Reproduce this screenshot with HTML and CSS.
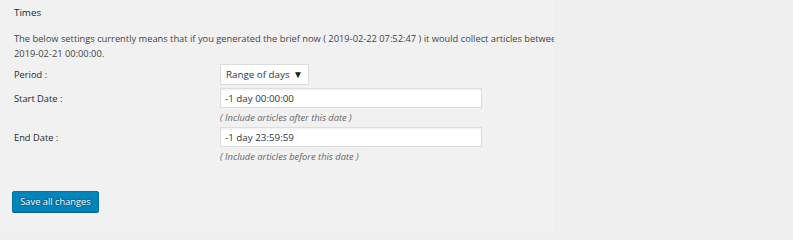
FILE: index.html
```html
<!DOCTYPE html>
<html lang="en">
<head>
<meta charset="utf-8">
<title>Times</title>
<link rel="stylesheet" href="styles.css">
</head>
<body>
<div class="page">
  <div class="panel">
    <h3 class="heading">Times</h3>
    <p class="intro">The below settings currently means that if you generated the brief now ( 2019-02-22 07:52:47 ) it would collect articles between 2019-02-20 00:00:00 and<br>2019-02-21 00:00:00.</p>
    <div class="form">
      <div class="label">Period :</div>
      <div class="field">
        <div class="select"><span>Range of days</span><span class="arrow">&#9660;</span></div>
      </div>
      <div class="label">Start Date :</div>
      <div class="field">
        <input class="text" type="text" value="-1 day 00:00:00">
        <div class="hint">( Include articles after this date )</div>
      </div>
      <div class="label">End Date :</div>
      <div class="field">
        <input class="text" type="text" value="-1 day 23:59:59">
        <div class="hint">( Include articles before this date )</div>
      </div>
    </div>
    <div class="actions">
      <button class="button" type="button">Save all changes</button>
    </div>
  </div>
</div>
</body>
</html>
```
FILE: styles.css
```css
html, body {
  margin: 0;
  padding: 0;
  background: #efefef;
}
body {
  font-family: "Open Sans", "Noto Sans", "Liberation Sans", sans-serif;
  font-size: 9.3px;
  line-height: 15px;
  color: #444;
}
.page {
  width: 793px;
  height: 233px;
  overflow: hidden;
}
.panel {
  width: 540px;
  height: 233px;
  padding-left: 14px;
  background: #f1f1f1;
  overflow: hidden;
  box-sizing: content-box;
}
.heading {
  margin: 0;
  padding-top: 5px;
  font-size: 9.8px;
  font-weight: normal;
  line-height: 15px;
  color: #23282d;
}
.intro {
  margin: 11px 0 0;
  white-space: nowrap;
}
.form {
  display: grid;
  grid-template-columns: 206px 262px;
  margin-top: 3px;
  row-gap: 3px;
  align-items: start;
}
.label {
  line-height: 15px;
  padding-top: 3px;
  color: #23282d;
}
.field {
  display: flex;
  flex-direction: column;
  align-items: flex-start;
}
.select {
  display: flex;
  align-items: center;
  justify-content: space-between;
  box-sizing: border-box;
  width: 89px;
  height: 21px;
  padding: 0 5px 0 5px;
  background: #fff;
  border: 1px solid #ddd;
  color: #32373c;
  font-size: 9.8px;
}
.arrow {
  font-size: 10px;
  color: #222;
}
.text {
  box-sizing: border-box;
  width: 262px;
  height: 20px;
  margin: 0;
  padding: 0 4px;
  border: 1px solid #ddd;
  background: #fff;
  box-shadow: inset 0 1px 2px rgba(0,0,0,0.07);
  font-family: inherit;
  font-size: 9.8px;
  color: #32373c;
  outline: none;
}
.hint {
  margin: 2px 0 -1px;
  font-style: italic;
  color: #666;
  line-height: 15px;
}
.actions {
  margin-top: 28px;
  margin-left: -2px;
}
.button {
  box-sizing: border-box;
  width: 87px;
  height: 21px;
  padding: 0;
  background: #0085ba;
  border: 1px solid #0073aa;
  border-radius: 2px;
  box-shadow: 0 1px 0 #006799;
  color: #fff;
  font-family: inherit;
  font-size: 9.3px;
  text-shadow: 0 -1px 1px #006799, 1px 0 1px #006799, 0 1px 1px #006799, -1px 0 1px #006799;
}
```
